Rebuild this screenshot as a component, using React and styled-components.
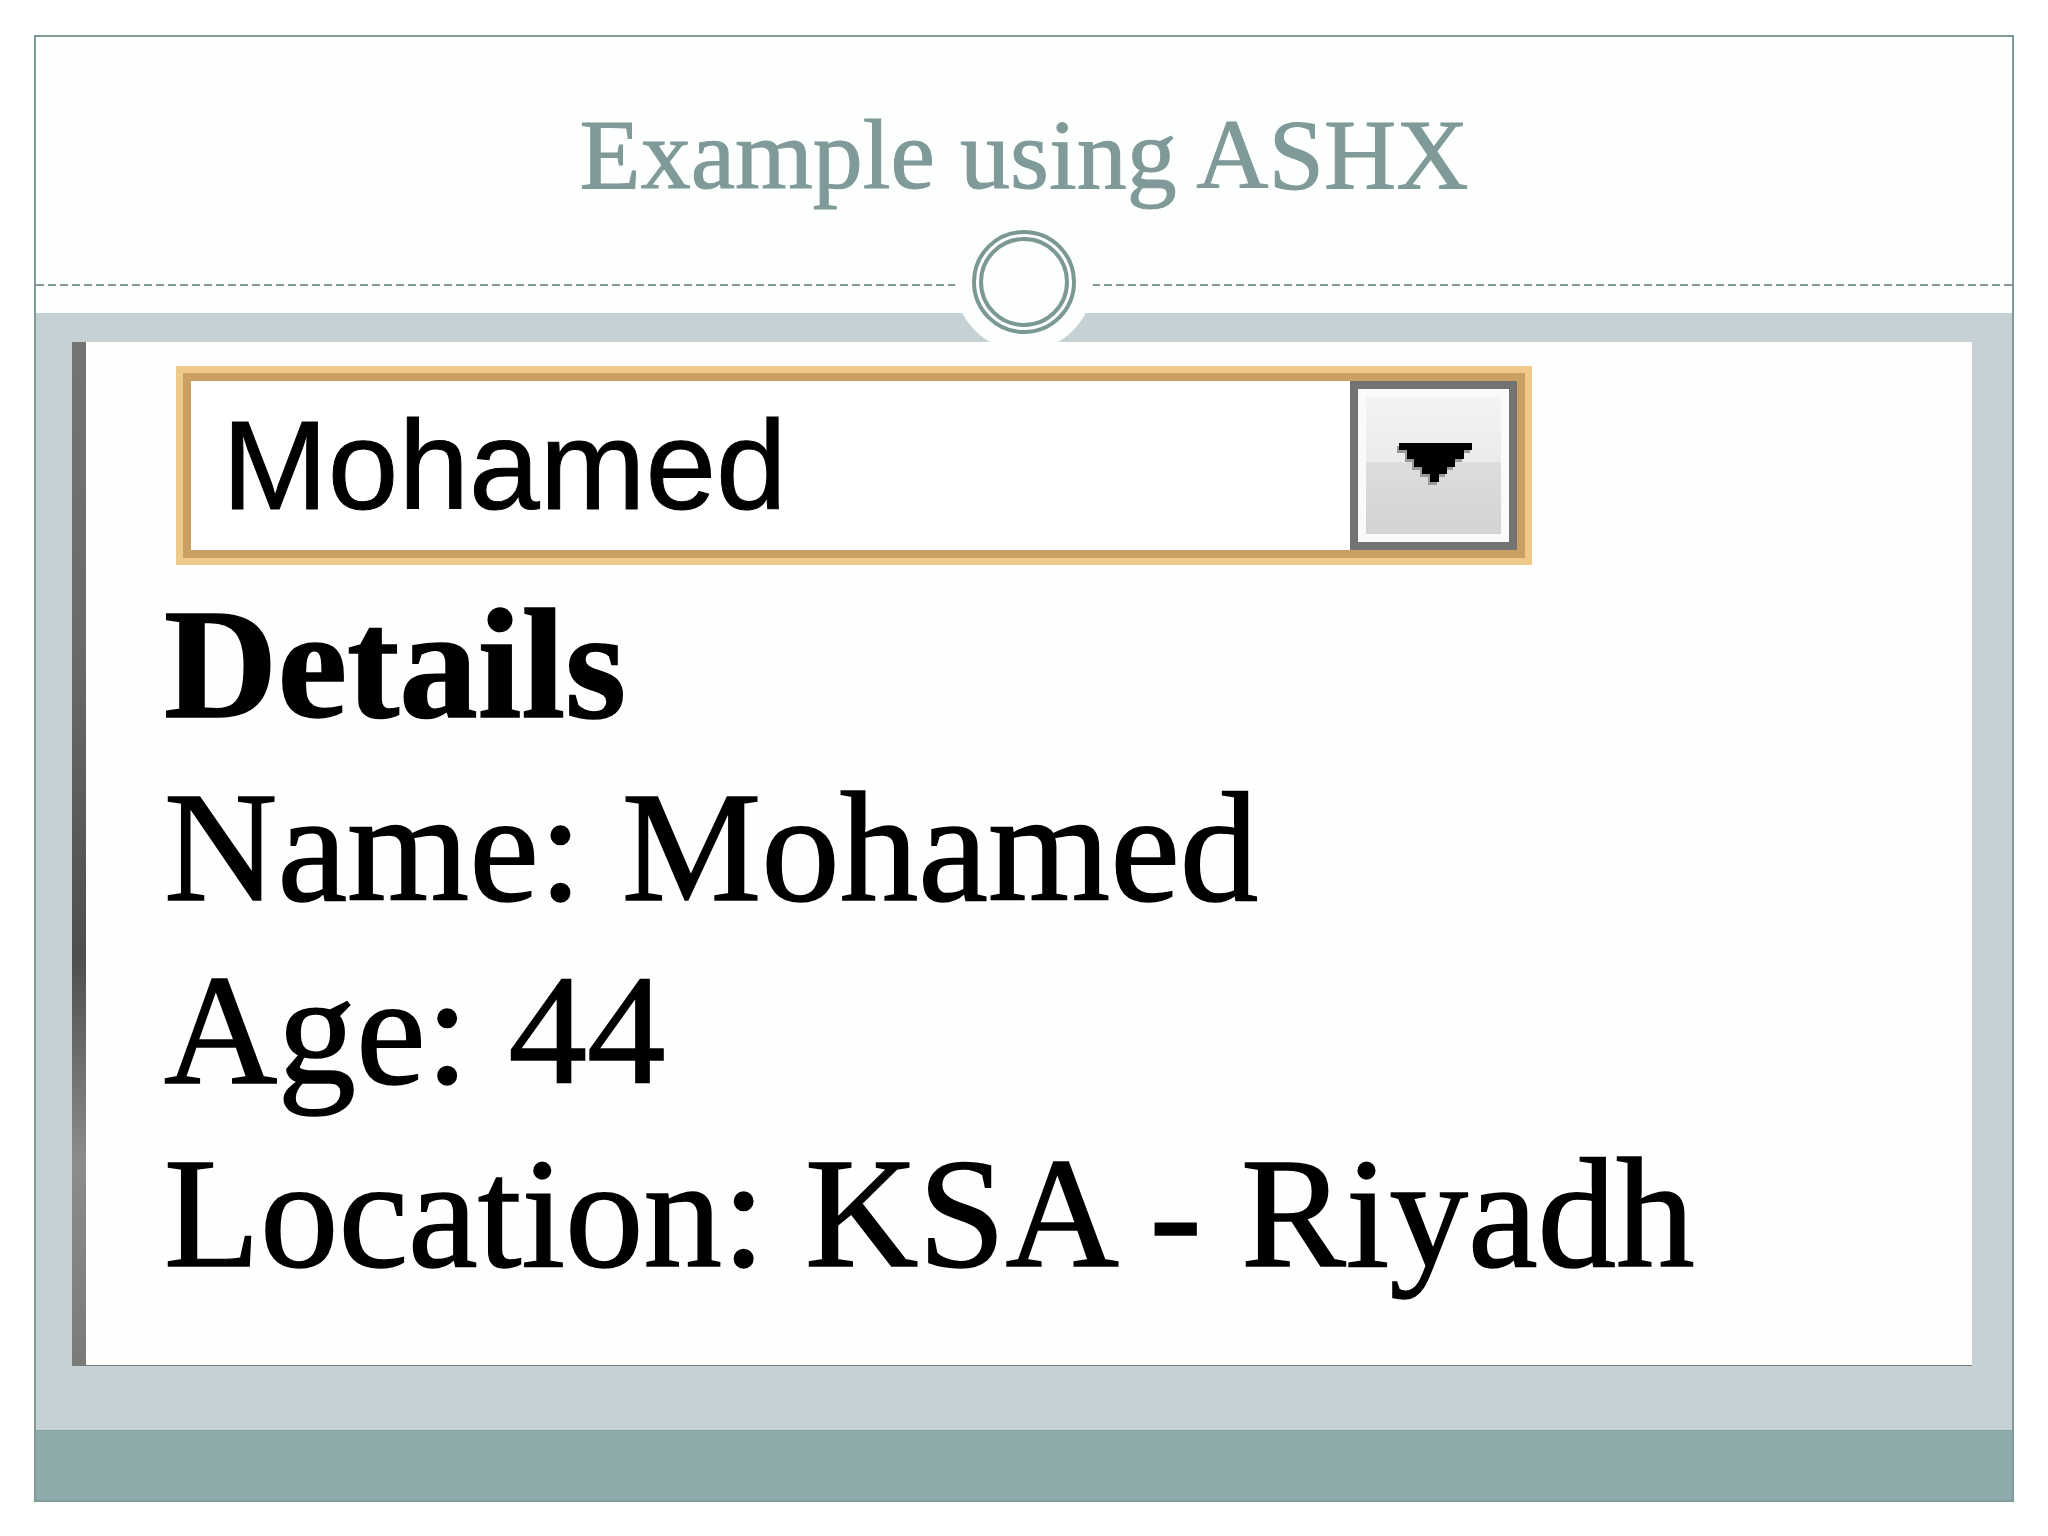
import styled, {createGlobalStyle} from 'styled-components';

const GlobalStyle = createGlobalStyle`
	body {
		margin: 0;
		background: #ffffff;
	}
`;

export default function App() {
	return (
		<>
			<GlobalStyle />
			<Slide>
				<Header>
					<Title>Example using ASHX</Title>
					<DashedRule />
				</Header>
				<Knob>
					<svg width="138" height="138" viewBox="0 0 138 138">
						<circle cx="69" cy="69" r="50" fill="none" stroke="#7b9893" strokeWidth="4" />
						<circle cx="69" cy="69" r="43" fill="none" stroke="#7b9893" strokeWidth="4" />
					</svg>
				</Knob>
				<Band>
					<Panel>
						<Select>
							<SelectValue>Mohamed</SelectValue>
							<DropButton>
								<ButtonFace>
									<svg width="80" height="44" viewBox="0 0 80 44">
										<polygon
											fill="#9a9a9a"
											points="2,4 75,4 75,11 67,11 67,20 58,20 58,28 50,28 50,35 42,35 42,43 33,43 33,35 25,35 25,28 17,28 17,20 10,20 10,11 2,11"
										/>
										<polygon
											fill="#000000"
											points="4,1 77,1 77,8 69,8 69,17 60,17 60,25 52,25 52,32 44,32 44,40 35,40 35,32 27,32 27,25 19,25 19,17 12,17 12,8 4,8"
										/>
									</svg>
								</ButtonFace>
							</DropButton>
						</Select>
						<Details>
							<Line bold>Details</Line>
							<Line>Name: Mohamed</Line>
							<Line>Age: 44</Line>
							<Line>Location: KSA - Riyadh</Line>
						</Details>
					</Panel>
				</Band>
				<Footer />
			</Slide>
		</>
	);
}

// #################################
// ########   STYLING    ###########
// #################################

const Slide = styled.div`
	position: relative;
	box-sizing: border-box;
	width: 1980px;
	margin: 35px 0 0 34px;
	border: 2px solid #7f9a98;
	display: flex;
	flex-direction: column;
	background: #fdfefe;
`;

const Header = styled.div`
	height: 276px;
	display: flex;
	flex-direction: column;
`;

const Title = styled.h1`
	margin: 0;
	padding-top: 68px;
	height: 247px;
	box-sizing: border-box;
	text-align: center;
	font-family: 'Liberation Serif', 'Times New Roman', serif;
	font-weight: normal;
	font-size: 100px;
	line-height: 100px;
	color: #7f9a98;
	-webkit-text-stroke: 1px #7f9a98;
`;

const DashedRule = styled.div`
	height: 2px;
	background: repeating-linear-gradient(90deg, #7f9a98 0 8px, transparent 8px 12px);
`;

const Knob = styled.div`
	position: absolute;
	left: 50%;
	top: 176px;
	width: 138px;
	height: 138px;
	margin-left: -69px;
	border-radius: 50%;
	background: #fdfefe;
	display: flex;

	svg {
		display: block;
	}
`;

const Band = styled.div`
	background: #c5d1d4;
	padding: 29px 40px 64px 36px;
`;

const Panel = styled.div`
	box-sizing: border-box;
	height: 1024px;
	background: #fefefe;
	border-left: 14px solid #777;
	border-image: linear-gradient(180deg, #747474 0%, #6a6a6a 30%, #4e4e4e 60%, #8c8c8c 80%, #7a7a7a 100%) 1;
	border-bottom: 1px solid #d2d6d7;
	padding: 31px 0 0 97px;
	display: flex;
	flex-direction: column;
`;

const Select = styled.div`
	box-sizing: border-box;
	width: 1342px;
	height: 185px;
	border: 8px solid #c9a062;
	box-shadow: 0 0 0 7px #efc98a;
	background: #ffffff;
	display: flex;
	align-items: stretch;
`;

const SelectValue = styled.div`
	flex: 1;
	display: flex;
	align-items: center;
	padding-left: 31px;
	font-family: 'Liberation Sans', Arial, sans-serif;
	font-size: 127px;
	line-height: 127px;
	color: #000;
	-webkit-text-stroke: 1px #000;
`;

const DropButton = styled.div`
	box-sizing: border-box;
	width: 167px;
	height: 169px;
	border: 8px solid #737373;
	background: #fafafc;
	padding: 8px;
	display: flex;
`;

const ButtonFace = styled.div`
	flex: 1;
	background: linear-gradient(180deg, #f3f3f5 0%, #ebebed 47%, #dddde0 48%, #d3d3d6 100%);
	display: flex;
	align-items: center;
	justify-content: center;
	padding-bottom: 4px;

	svg {
		display: block;
		margin-left: 2px;
	}
`;

const Details = styled.div`
	margin: 15px 0 0 -19px;
	font-family: 'Liberation Serif', 'Times New Roman', serif;
	font-size: 157px;
	line-height: 183px;
	color: #000;
	-webkit-text-stroke: 1.5px #000;
`;

const Line = styled.div`
	font-weight: ${props => (props.bold ? 'bold' : 'normal')};
	white-space: nowrap;
`;

const Footer = styled.div`
	height: 70px;
	box-sizing: border-box;
	border-top: 1px solid #86a0a1;
	background: #8eaaab;
`;
